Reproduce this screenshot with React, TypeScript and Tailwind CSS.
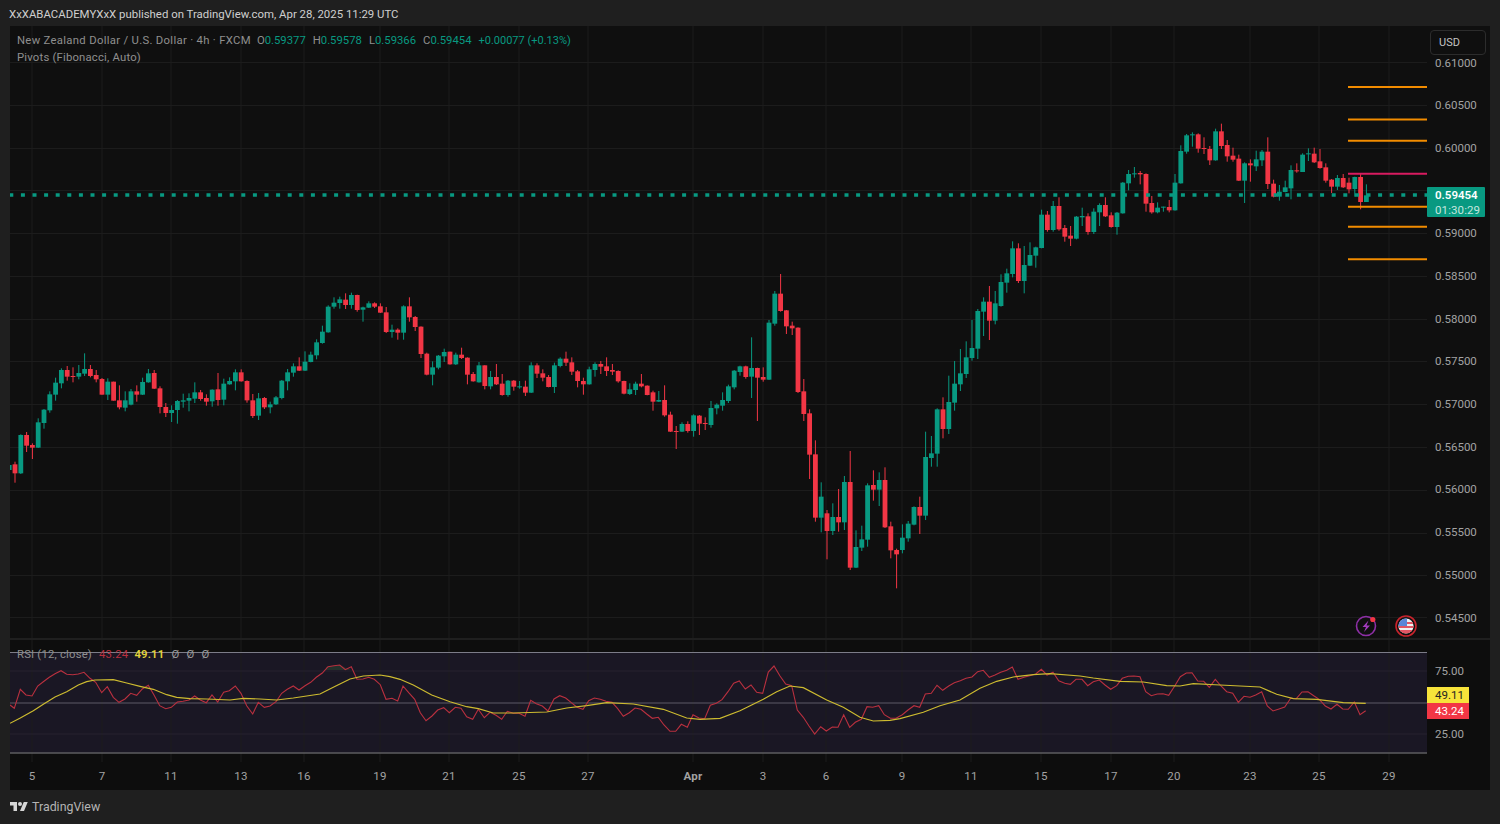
import { useMemo } from "react";

// body top, body bottom, wick top, wick bottom, read from the chart at 3x
const LEFT =
  "g555,570,553,572 r553,580,545,608 g465,580,463,582 r465,497,456,516 r495,503,490,537 g427,503,415,504 g389,429,387,446 g343,391,334,398 g308,344,293,362 g270,310,265,325 r270,290,258,302 r288,290,262,307 g279,290,255,298 g267,281,220,288 r267,288,255,292 r285,298,270,307 r297,344,294,344 g305,344,295,360 r305,362,305,362 r361,382,316,388 g361,383,334,394 g334,374,327,376 r334,344,316,365 g306,344,293,345 g280,307,267,308 r279,326,270,327 r325,381,319,400 r381,399,369,411 g390,399,376,426 g363,390,360,431 g361,365,341,383 g354,362,340,394 g337,356,307,369 r337,357,330,362 r354,365,343,377 g329,364,328,380 r328,360,279,377 g311,359,296,376 g303,313,292,314 g277,304,268,331 r277,304,268,305 r303,361,301,368 r361,408,342,414 g355,407,339,420 r354,382,351,387 g373,382,365,400 g352,373,348,375 g302,354,300,358 g277,304,267,331 g259,278,250,290 r259,272,232,273 g245,272,214,273 g224,246,215,247 g187,226,178,238 g155,189,137,191 g80,157,76,158 g68,80,52,86 g58,69,50,86 r59,75,40,87 g45,75,38,86 r45,90,44,95 g82,89,80,125 g70,83,64,84 r70,80,67,84 r79,98,70,99 r97,156,81,159 g149,156,134,173 r149,158,145,179 g79,158,76,179 r79,112,52,125 r111,141,108,153 r140,222,139,234 r221,284,218,286 g262,284,244,316 g227,263,225,268 g216,229,206,246";
const MIDDLE =
  "r275,313,275,314 g284,313,278,315 r284,294,263,297 r293,344,292,373 r342,364,336,365 g316,367,306,368 r316,378,316,388 g351,379,333,388 r351,373,312,375 r371,405,342,407 g362,405,360,410 r362,380,360,392 g379,382,363,386 r380,398,362,408 g316,398,307,399 r316,341,310,354 r340,353,328,364 r351,381,345,382 g316,381,308,399 g296,318,292,322 r296,308,275,318 r307,335,292,345 r334,363,330,382 r363,373,353,404 g328,373,320,374 g312,330,307,350 r312,320,303,342 r319,333,292,348 r330,335,312,345 r333,364,331,368 r363,401,362,403 g388,402,370,405 g371,390,365,405 r371,379,342,382 r377,405,376,406 r397,425,392,452 g420,425,393,426 r420,466,376,470 r464,515,455,516 r513,515,498,567 g492,515,487,516 r492,513,484,518 g466,513,463,530 r467,491,465,525 r489,491,472,510 g444,495,423,503 g434,445,430,463 g420,437,397,452 g379,423,374,429 g332,382,330,388 g319,336,317,347 r319,351,317,356 g324,350,232,414 r324,353,323,483 r351,359,322,365 g188,359,180,360 g101,191,93,197 r101,153,42,155 r151,199,150,222 r197,205,185,225 r203,396,202,399 r394,462,357,483 r460,584,448,657 r583,773,541,785 g710,773,667,817 r760,813,750,898 g771,813,730,825 r771,787,687,815 g666,787,648,810 r666,923,573,930 g861,923,811,924 g838,863,797,873 g676,839,670,860 r675,689,631,722 g660,689,637,738 r660,802,622,804 r799,871,785,895 r870,883,866,985";
const RIGHT =
  "g1283,1320,1243,1330 g1241,1285,1233,1295 g1191,1244,1189,1246 r1191,1217,1160,1272 g1041,1217,965,1230 g1030,1044,978,1070 g898,1031,895,1070 r898,957,862,985 g876,957,797,972 g821,878,753,902 g790,823,717,843 g742,792,694,804 g714,744,630,752 g603,716,597,747 g575,605,562,678 r575,632,528,690 g580,632,543,643 g516,588,493,590 g490,518,476,548 g415,492,394,502 r415,513,400,519 g465,513,408,550 g435,467,397,468 g412,437,410,473 g314,414,299,415 r314,360,303,365 g288,360,273,365 r288,358,262,362 r354,380,345,395 r377,386,348,408 g320,386,318,388 g318,322,293,348 r319,366,310,374 g305,366,295,372 g285,307,280,348 r285,319,262,321 r316,351,307,353 g308,351,306,374 g218,310,216,311 g192,220,180,241 g190,193,171,203 r189,193,183,223 r192,281,190,305 r279,307,258,311 g293,307,277,310 g290,293,290,305 r291,301,270,307 g218,301,192,302 g123,220,106,221 g76,125,72,131 g73,76,67,110 r73,116,70,128 r114,116,82,132 r117,151,108,165 g64,151,56,152 r64,108,41,117 r105,139,90,155 r137,149,113,155 r146,212,134,213 g160,212,157,279 r160,166,148,215 g148,169,122,183 g125,151,120,168 r125,222,82,237 r221,260,209,262 g245,260,225,272 g232,246,212,247 g180,235,166,268 r181,183,160,188 g134,186,130,186 g130,133,115,153 r131,157,113,159 r154,174,117,176 r172,212,160,218 r209,230,207,249 g204,230,195,240 r204,232,192,234 r218,238,203,250 g201,237,200,260 r201,276,192,298 g256,276,223,276";

const RSI_A =
  "30,195 43,205 61,148 78,165 96,168 113,138 130,125 148,112 165,101 183,92 200,103 218,104 235,102 252,97 270,115 287,127 305,158 322,140 340,172 357,187 375,177 392,160 410,166 427,147 445,136 462,165 479,197 497,206 514,202 532,186 549,184 567,180 584,168 601,180 619,188 636,165 653,186 671,157 688,152 706,138 723,160 740,197 758,222 775,187 793,202 810,198 828,185 845,160 862,148 880,138 897,150 915,137 932,127 949,112 967,99 984,80 1002,77 1019,75 1036,89 1054,80 1071,118 1089,117 1106,112 1123,118 1141,134 1158,178 1176,175 1193,183";
const RSI_B =
  "9,138 26,158 44,178 61,218 78,242 96,228 113,210 131,203 148,218 166,202 183,205 200,230 218,238 235,208 253,233 270,217 288,226 305,238 322,214 340,220 357,220 375,229 392,181 409,191 427,198 444,213 462,177 479,167 497,174 514,188 531,202 549,208 566,182 583,174 601,178 618,184 636,187 653,206 670,229 688,218 705,204 723,208 740,222 757,235 775,232 792,255 810,274 827,274 844,253 862,262 879,224 897,234 914,236 931,196 949,190 966,179 984,155 1001,130 1018,123 1036,147 1053,135 1070,157 1088,160 1105,96 1122,78 1140,108 1157,132 1175,137 1192,210 1210,232 1227,258 1244,282 1262,260 1279,273 1297,261 1314,262 1331,224 1349,262 1366,247 1384,238 1401,200 1418,202 1436,197 1453,224 1471,235 1488,235";
const RSI_C =
  "7,224 24,210 42,197 59,202 76,162 94,160 111,136 128,151 146,138 163,128 181,122 198,115 216,111 233,95 250,91 268,112 285,105 302,97 320,91 337,81 354,118 372,112 389,107 407,102 424,88 441,105 459,97 476,122 494,130 511,133 528,118 546,118 563,137 580,125 598,120 615,135 632,148 650,137 667,115 685,109 702,108 720,110 737,155 754,167 772,162 789,161 806,166 824,138 841,110 859,99 876,98 893,123 911,124 928,142 946,118 963,138 980,155 998,160 1015,187 1032,169 1050,172 1067,165 1085,155 1102,198 1119,213 1137,207 1154,201 1172,175 1189,176 1206,156 1224,155 1241,167 1258,178 1276,198 1293,207 1311,193 1328,207 1345,208 1363,186 1380,224 1397,212";

const MA_A =
  "30,250 61,234 100,212 130,193 165,171 200,155 235,135 260,125 285,120 340,119 380,129 420,139 460,148 500,164 530,172 570,176 620,177 690,180 730,175 780,177 830,180 880,174 960,162 1000,142 1050,117 1090,108 1140,105 1170,110";
const MA_B =
  "0,118 40,135 95,165 150,185 200,200 235,206 280,219 340,219 440,216 500,204 560,197 620,188 700,192 790,208 860,234 900,238 960,235 1020,212 1090,178 1130,155 1170,138 1210,143 1280,180 1330,202 1380,232 1420,243 1470,241";
const MA_C =
  "0,236 70,217 120,197 180,180 240,145 290,124 340,111 400,104 450,101 540,108 580,114 660,124 730,126 800,137 840,138 880,131 960,135 1080,141 1130,163 1180,176 1250,178 1330,188 1397,190";

const PRICES = ["0.61000", "0.60500", "0.60000", "0.59500", "0.59000", "0.58500", "0.58000", "0.57500", "0.57000", "0.56500", "0.56000", "0.55500", "0.55000", "0.54500"];
const H_GRID = [62, 105, 148, 190, 233, 276, 319, 361, 404, 447, 490, 533, 575, 617];
const TICKS: [number, string][] = [[32, "5"], [102, "7"], [171, "11"], [241, "13"], [304, "16"], [380, "19"], [449, "21"], [519, "25"], [588, "27"], [693, "Apr"], [763, "3"], [826, "6"], [902, "9"], [971, "11"], [1041, "15"], [1111, "17"], [1174, "20"], [1250, "23"], [1319, "25"], [1389, "29"]];
const PIVOTS: [number, string][] = [[87, "#f28c00"], [119.5, "#f28c00"], [140.7, "#f28c00"], [173.7, "#d81b60"], [206.7, "#f28c00"], [226.7, "#f28c00"], [259.3, "#f28c00"]];

function parseRows(rows: string, startIndex: number, top: number) {
  return rows.split(" ").map((row, n) => {
    const [a, b, c, d] = row.slice(1).split(",").map(Number);
    return {
      x: 15 + 5.8 * (startIndex + n),
      up: row[0] === "g",
      bodyTop: top + a / 3,
      bodyBottom: top + b / 3,
      wickTop: top + c / 3,
      wickBottom: top + d / 3,
    };
  });
}

function toPath(parts: [string, number][]) {
  return parts
    .flatMap(([points, left]) =>
      points.split(" ").map((p) => {
        const [x, y] = p.split(",").map(Number);
        return `${(left + x / 3).toFixed(1)},${(640 + y / 3).toFixed(1)}`;
      }),
    )
    .join(" ");
}

function GridLines({ from, to }: { from: number; to: number }) {
  return (
    <>
      {TICKS.map(([x]) => (
        <line key={x} x1={x} x2={x} y1={from} y2={to} stroke="#1c1c1c" />
      ))}
    </>
  );
}

function PriceChart() {
  const candles = useMemo(
    () => [...parseRows(LEFT, -1, 280), ...parseRows(MIDDLE, 75, 260), ...parseRows(RIGHT, 153, 110)],
    [],
  );
  return (
    <svg viewBox="10 26 1417 612" className="block w-full h-full">
      {H_GRID.map((y) => (
        <line key={y} x1={10} x2={1427} y1={y + 0.5} y2={y + 0.5} stroke="#1c1c1c" />
      ))}
      <GridLines from={26} to={638} />
      {candles.map((c) => (
        <g key={c.x} fill={c.up ? "#089981" : "#f23645"}>
          <rect x={c.x - 0.5} y={c.wickTop} width={1} height={c.wickBottom - c.wickTop} />
          <rect x={c.x - 2.4} y={c.bodyTop} width={4.8} height={Math.max(c.bodyBottom - c.bodyTop, 1)} />
        </g>
      ))}
      <line x1={9.3} x2={1427} y1={195} y2={195} stroke="#089981" strokeWidth={3.6} strokeDasharray="4 7.6" />
      {PIVOTS.map(([y, color]) => (
        <line key={y} x1={1348} x2={1427} y1={y} y2={y} stroke={color} strokeWidth={2} />
      ))}
      {/* session break + calendar markers */}
      <circle cx={1366} cy={626} r={9.5} fill="none" stroke="#8e2fa6" strokeWidth={1.6} />
      <path d="M1368.5 620.5 l-6 6.5 h3.5 l-2 5 l6 -6.5 h-3.5 z" fill="#a23bbd" />
      <circle cx={1372.8} cy={619.5} r={2.6} fill="#f23645" />
      <circle cx={1406} cy={626} r={10} fill="none" stroke="#c8232c" strokeWidth={1.6} />
      <clipPath id="flag">
        <circle cx={1406} cy={626} r={7.6} />
      </clipPath>
      <g clipPath="url(#flag)">
        <rect x={1398} y={618} width={16} height={16} fill="#f0f0f0" />
        <rect x={1398} y={622} width={16} height={2} fill="#e25563" />
        <rect x={1398} y={626} width={16} height={2} fill="#e25563" />
        <rect x={1398} y={630} width={16} height={4} fill="#e25563" />
        <rect x={1398} y={618} width={9} height={8} fill="#5a86d8" />
      </g>
    </svg>
  );
}

function RsiChart() {
  const red = toPath([[RSI_A, 0], [RSI_B, 400], [RSI_C, 900]]);
  const yellow = toPath([[MA_A, 0], [MA_B, 400], [MA_C, 900]]);
  return (
    <svg viewBox="10 640 1417 122" className="block w-full h-full">
      <rect x={10} y={652} width={1417} height={101} fill="#1a1724" />
      <GridLines from={640} to={762} />
      <line x1={10} x2={1427} y1={671} y2={671} stroke="#26232f" />
      <line x1={10} x2={1427} y1={734} y2={734} stroke="#26232f" />
      <polygon points="326,667 334,666 340,665 346,668 351,670 326,670" fill="#24312c" />
      <line x1={10} x2={1427} y1={652.5} y2={652.5} stroke="#7c7c88" />
      <line x1={10} x2={1427} y1={703} y2={703} stroke="#5c5a66" />
      <line x1={10} x2={1427} y1={753} y2={753} stroke="#5c5c5f" strokeWidth={1.6} />
      <polyline points={red} fill="none" stroke="#b9303f" strokeWidth={1.1} />
      <polyline points={yellow} fill="none" stroke="#cdbb30" strokeWidth={1.2} />
    </svg>
  );
}

function Logo() {
  return (
    <svg viewBox="0 0 36 28" className="w-[18px] h-[14px]" fill="#d6d6d6">
      <path d="M14 22H7V11H0V4h14v18zM28 22h-8l7.5-18h8L28 22z" />
      <circle cx={20} cy={8} r={4} />
    </svg>
  );
}

export default function App() {
  return (
    <div className="w-[1500px] h-[824px] flex flex-col bg-[#1f1f1f] overflow-hidden font-[Roboto,sans-serif]">
      <div className="h-[26px] flex items-center pl-[9px] pt-[3px] text-[11.4px] text-[#cfcfcf]">
        XxXABACADEMYXxX published on TradingView.com, Apr 28, 2025 11:29 UTC
      </div>

      <div className="mx-[10px] w-[1480px] h-[764px] flex flex-col bg-[#0d0d0d]">
        <div className="h-[612px] flex bg-[#0f0f0f]">
          <div className="relative w-[1417px] h-full">
            <PriceChart />
            <div className="absolute left-[7px] top-[6px] text-[11.3px] tracking-[0.2px] text-[#8f8f8f] leading-[17px]">
              <div className="flex tracking-normal">
                <span className="tracking-[0.31px]">New Zealand Dollar / U.S. Dollar · 4h · FXCM</span>
                <span className="ml-[6px]">O<span className="text-[#089981]">0.59377</span></span>
                <span className="ml-[7px]">H<span className="text-[#089981]">0.59578</span></span>
                <span className="ml-[7px]">L<span className="text-[#089981]">0.59366</span></span>
                <span className="ml-[7px]">C<span className="text-[#089981]">0.59454</span></span>
                <span className="ml-[7px] text-[11px] text-[#089981]">+0.00077 (+0.13%)</span>
              </div>
              <div>Pivots (Fibonacci, Auto)</div>
            </div>
          </div>
          <div className="relative w-[63px] h-full pt-[15.6px] pl-[8px] text-[11.5px] text-[#a3a3a3]">
            {PRICES.map((p) => (
              <div key={p} className="h-[42.7px] leading-[42.7px]">
                {p}
              </div>
            ))}
            <div className="absolute left-[3px] top-[4px] w-[56px] h-[25px] flex items-center pt-[1px] pl-[8px] border border-[#2c2c2c] rounded-[4px] bg-[#0f0f0f] text-[11px] text-[#c4c4c4]">
              USD
            </div>
            <div className="absolute left-0 top-[161px] w-[58px] h-[30px] rounded-[1px] bg-[#089981] pt-[1px] pl-[8px] text-[11.5px] leading-[14.5px]">
              <div className="font-semibold text-white">0.59454</div>
              <div className="text-[#c5e6df] tracking-[0.1px]">01:30:29</div>
            </div>
          </div>
        </div>

        <div className="h-[2px] bg-[#1f1f1f]" />

        <div className="h-[122px] flex">
          <div className="relative w-[1417px] h-full">
            <RsiChart />
            <div className="absolute left-[7px] top-[7px] flex items-center text-[11.3px] leading-[15px] text-[#8f8f8f] tracking-[0.2px]">
              <span>RSI (12, close)</span>
              <span className="ml-[7px] text-[#b9303f]">43.24</span>
              <span className="ml-[6px] text-[#e3d33a] font-semibold">49.11</span>
              <span className="ml-[7px] text-[#9a9a9a]">Ø</span>
              <span className="ml-[7px] text-[#9a9a9a]">Ø</span>
              <span className="ml-[7px] text-[#9a9a9a]">Ø</span>
            </div>
          </div>
          <div className="w-[63px] flex flex-col text-[11.5px] text-[#a3a3a3]">
            <div className="mt-[23px] h-[16px] leading-[16px] pl-[8px]">75.00</div>
            <div className="mt-[8px] w-[42px] h-[16px] leading-[16px] pl-[8px] bg-[#f7e33a] text-[#222]">49.11</div>
            <div className="w-[42px] h-[16px] leading-[16px] pl-[8px] bg-[#f23645] text-white">43.24</div>
            <div className="mt-[7px] h-[16px] leading-[16px] pl-[8px]">25.00</div>
          </div>
        </div>

        <div className="h-[28px]">
          <svg viewBox="10 762 1480 28" className="block w-full h-full text-[11.5px] tracking-[0.2px]">
            {TICKS.map(([x, label]) => (
              <text
                key={x}
                x={x}
                y={780}
                textAnchor="middle"
                fill="#a3a3a3"
                className={label === "Apr" ? "font-bold" : ""}
              >
                {label}
              </text>
            ))}
          </svg>
        </div>
      </div>

      <div className="flex-1 flex items-center pl-[10px] gap-[4px] text-[12.4px] text-[#b4b4b4]">
        <Logo />
        <span>TradingView</span>
      </div>
    </div>
  );
}
